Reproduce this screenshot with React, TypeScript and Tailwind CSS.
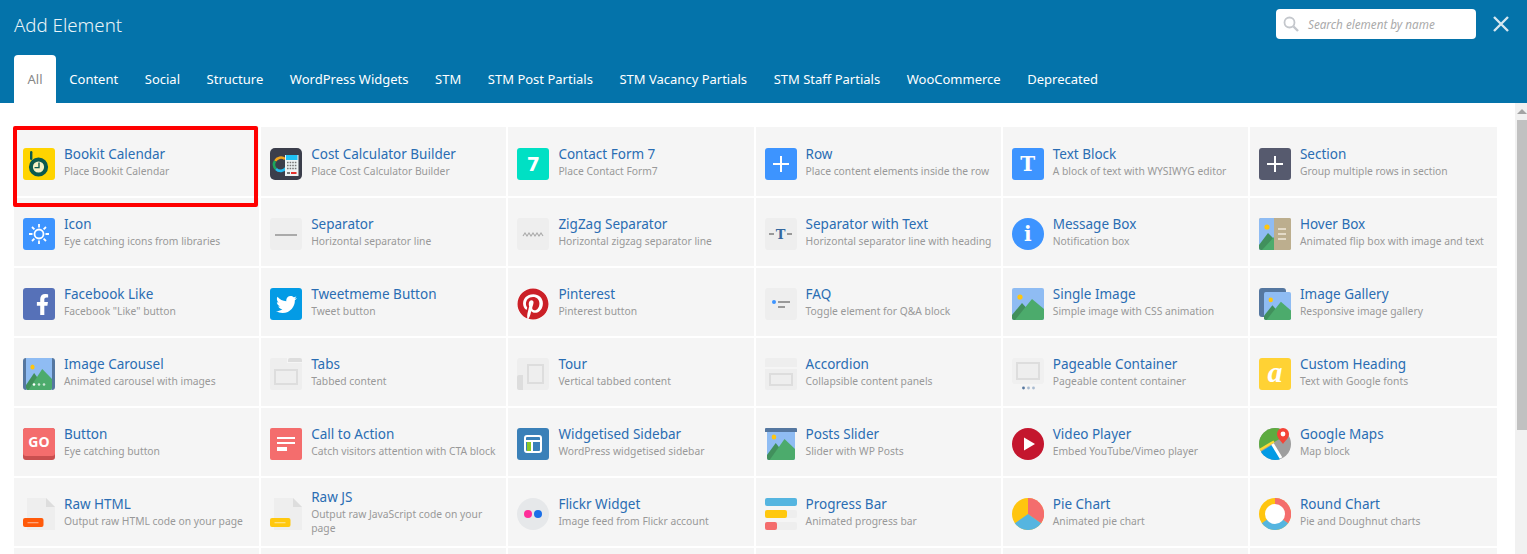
import React from "react";
import { FaFacebookF, FaPinterest, FaTwitter } from "react-icons/fa";

const tabs = ["Content", "Social", "Structure", "WordPress Widgets", "STM", "STM Post Partials", "STM Vacancy Partials", "STM Staff Partials", "WooCommerce", "Deprecated"];

// shared picture used by the image-like icons
const Hills = () => (
  <>
    <circle cx="8" cy="9" r="2.6" fill="#ffc50f" />
    <path d="M0 27L10 15L18 24L6 32H2a2 2 0 0 1-2-2Z" fill="#41905c" />
    <path d="M3 32L20 11L32 21V30a2 2 0 0 1-2 2Z" fill="#4cab6c" />
  </>
);

const Svg = ({ children }: { children: React.ReactNode }) => (
  <svg viewBox="0 0 32 32" className="w-8 h-8 shrink-0">{children}</svg>
);

const Square = ({ className, children }: { className: string; children: React.ReactNode }) => (
  <div className={`w-8 h-8 shrink-0 rounded-[3px] flex items-center justify-center ${className}`}>{children}</div>
);

const Plus = () => (
  <svg viewBox="0 0 32 32" className="w-8 h-8"><path d="M16 8V24M8 16H24" stroke="#fff" strokeWidth="2" /></svg>
);

const Doc = ({ color }: { color: string }) => (
  <Svg>
    <path d="M4 0H23L32 9V32H4Z" fill="#eee" />
    <path d="M23 0L32 9H23Z" fill="#ddd" />
    <rect x="0" y="20" width="20.5" height="9" rx="2" fill={color} />
    <rect x="4.5" y="24" width="11" height="1.3" fill="#fff" opacity=".45" />
  </Svg>
);

const icons: Record<string, React.ReactNode> = {
  bookit: (
    <Svg>
      <rect width="32" height="32" rx="3" fill="#ffd400" />
      <rect x="7" y="3" width="2.4" height="9" rx="1.2" fill="#0b5a4e" />
      <circle cx="15.5" cy="19" r="7.6" fill="#f4f1c4" stroke="#0b5a4e" strokeWidth="4" />
      <path d="M16 14.5V19.6H11.5" fill="none" stroke="#0b5a4e" strokeWidth="1.4" />
    </Svg>
  ),
  cost: (
    <Svg>
      <rect width="32" height="32" rx="5" fill="#3b3e4b" />
      <path d="M5.2 13A6.5 6.5 0 0 1 15 11" fill="none" stroke="#f2a51e" strokeWidth="2.6" />
      <path d="M6 21A6.5 6.5 0 0 1 5 13" fill="none" stroke="#1da55c" strokeWidth="2.6" />
      <path d="M16 20A6.5 6.5 0 0 1 6 21" fill="none" stroke="#25bdf0" strokeWidth="2.6" />
      <rect x="15" y="7" width="13.5" height="21" fill="#eef3f4" />
      <rect x="16" y="7" width="11.5" height="5" fill="#1fc2f5" />
      <path d="M17 14.5H26.5M17 17.5H26.5M17 20.5H26.5" stroke="#777" strokeWidth="1.4" strokeDasharray="1.6 1" />
      <rect x="21" y="24" width="5.5" height="2" fill="#e5322d" />
      <rect x="17" y="24" width="3" height="2" fill="#777" />
    </Svg>
  ),
  cf7: <Square className="bg-[#00e0c4] text-white text-[19px] font-bold font-['DejaVu_Sans',sans-serif] leading-none">7</Square>,
  row: <Square className="bg-[#3d94ff]"><Plus /></Square>,
  text: <Square className="bg-[#3d94ff] text-white text-[20px] font-bold font-['DejaVu_Serif',serif] leading-none">T</Square>,
  section: <Square className="bg-[#565a6e]"><Plus /></Square>,
  icon: (
    <Svg>
      <rect width="32" height="32" rx="3" fill="#3d94ff" />
      <circle cx="16" cy="16" r="4.5" fill="none" stroke="#fff" strokeWidth="1.8" />
      <path d="M16 6V9.5M16 22.5V26M6 16H9.5M22.5 16H26M9 9L11.4 11.4M20.6 20.6L23 23M23 9L20.6 11.4M11.4 20.6L9 23" stroke="#fff" strokeWidth="1.8" />
    </Svg>
  ),
  separator: (
    <Svg>
      <rect width="32" height="32" rx="3" fill="#eee" />
      <rect x="5" y="16" width="22" height="2" fill="#aaa" />
    </Svg>
  ),
  zigzag: (
    <Svg>
      <rect width="32" height="32" rx="3" fill="#eee" />
      <path d="M6 18L8 15L10 18L12 15L14 18L16 15L18 18L20 15L22 18L24 15L26 18" fill="none" stroke="#aaa" strokeWidth="1.1" />
    </Svg>
  ),
  septext: (
    <Square className="bg-[#eee] gap-[2px]">
      <span className="w-[5px] h-[2px] bg-[#999]" />
      <span className="text-[#34689f] text-[13px] font-bold font-['DejaVu_Serif',serif] leading-none">T</span>
      <span className="w-[5px] h-[2px] bg-[#999]" />
    </Square>
  ),
  message: (
    <div className="w-8 h-8 shrink-0 rounded-full bg-[#3d94ff] flex items-center justify-center text-white text-[20px] font-bold font-['DejaVu_Serif',serif] leading-none">i</div>
  ),
  hover: (
    <Svg>
      <defs>
        <clipPath id="hoverClip"><rect width="15" height="32" /></clipPath>
      </defs>
      <rect width="32" height="32" rx="2" fill="#bcae8e" />
      <g clipPath="url(#hoverClip)">
        <rect width="32" height="32" rx="2" fill="#8fbcf3" />
        <circle cx="8" cy="9" r="2.6" fill="#ffc50f" />
        <path d="M0 27L9 15L15 21V32H2a2 2 0 0 1-2-2Z" fill="#41905c" />
        <path d="M3 32L15 19V32Z" fill="#4cab6c" />
      </g>
      <path d="M15 0H30a2 2 0 0 1 2 2V30a2 2 0 0 1-2 2H15Z" fill="#bcae8e" />
      <path d="M19 11H27M19 16H27M19 21H27" stroke="#efe9da" strokeWidth="1.6" />
    </Svg>
  ),
  facebook: <Square className="bg-[#5671b8] text-white pl-[7px] text-[21px]"><FaFacebookF /></Square>,
  twitter: <Square className="bg-[#039be5] text-white text-[21px]"><FaTwitter /></Square>,
  pinterest: (
    <div className="w-8 h-8 shrink-0 rounded-full bg-white text-[#cb2027] text-[32px] flex"><FaPinterest /></div>
  ),
  faq: (
    <Svg>
      <rect width="32" height="32" rx="3" fill="#eee" />
      <circle cx="9" cy="14" r="2" fill="#3d94ff" />
      <rect x="13" y="13" width="12" height="2" fill="#999" />
      <rect x="13" y="18" width="7" height="2" fill="#999" />
    </Svg>
  ),
  single: (
    <Svg>
      <rect width="32" height="32" rx="2" fill="#8fbcf3" />
      <Hills />
    </Svg>
  ),
  gallery: (
    <Svg>
      <rect width="27" height="29" rx="3" fill="#5577a0" />
      <svg x="5" y="4" width="27" height="28" viewBox="0 0 32 32" preserveAspectRatio="none">
        <rect width="32" height="32" rx="2" fill="#8fbcf3" />
        <Hills />
      </svg>
    </Svg>
  ),
  carousel: (
    <Svg>
      <rect width="32" height="32" rx="3" fill="#5577a0" />
      <svg x="3" y="0" width="26" height="32" viewBox="0 0 32 32" preserveAspectRatio="none">
        <rect width="32" height="32" fill="#8fbcf3" />
        <Hills />
      </svg>
      <circle cx="11" cy="26.5" r="1.3" fill="#fff" />
      <circle cx="16" cy="26.5" r="1.3" fill="#fff" opacity=".7" />
      <circle cx="21" cy="26.5" r="1.3" fill="#fff" opacity=".7" />
    </Svg>
  ),
  tabs: (
    <Svg>
      <path d="M0 2a2 2 0 0 1 2-2H17V5H32V30a2 2 0 0 1-2 2H2a2 2 0 0 1-2-2Z" fill="#eee" />
      <path d="M18 2a2 2 0 0 1 2-2H30a2 2 0 0 1 2 2V4H18Z" fill="#ddd" />
      <rect x="5" y="12" width="22" height="14" fill="none" stroke="#ddd" strokeWidth="2" />
    </Svg>
  ),
  tour: (
    <Svg>
      <rect width="32" height="32" rx="3" fill="#eee" />
      <path d="M0 19a2 2 0 0 1 2-2H6V32H2a2 2 0 0 1-2-2Z" fill="#ddd" />
      <rect x="11" y="7" width="15" height="18" fill="none" stroke="#ddd" strokeWidth="2" />
    </Svg>
  ),
  accordion: (
    <Svg>
      <path d="M0 2a2 2 0 0 1 2-2H30a2 2 0 0 1 2 2V9H0Z" fill="#eee" />
      <path d="M0 11H32V30a2 2 0 0 1-2 2H2a2 2 0 0 1-2-2Z" fill="#eee" />
      <rect x="5" y="16" width="22" height="11" fill="none" stroke="#ddd" strokeWidth="2" />
    </Svg>
  ),
  pageable: (
    <Svg>
      <rect width="32" height="26" rx="3" fill="#f0f0f0" />
      <rect x="5" y="5" width="22" height="16" fill="#eee" stroke="#ddd" strokeWidth="2" />
      <circle cx="11.5" cy="30" r="1.4" fill="#5577a0" />
      <circle cx="16.5" cy="30" r="1.4" fill="#a9bbd0" />
      <circle cx="21.5" cy="30" r="1.4" fill="#a9bbd0" />
    </Svg>
  ),
  heading: <Square className="bg-[#ffd234] text-white text-[30px] italic font-bold font-['Liberation_Serif',serif] leading-none pb-[4px]">a</Square>,
  button: (
    <div className="w-8 h-8 shrink-0 rounded-[3px] bg-[#c94f4f]">
      <div className="h-7 rounded-[3px] bg-[#f46d6d] flex items-center justify-center text-white text-[14px] font-bold font-['Open_Sans',sans-serif] leading-none">GO</div>
    </div>
  ),
  cta: (
    <Svg>
      <rect width="32" height="32" rx="2" fill="#f46d6d" />
      <rect x="7" y="9" width="18" height="2" fill="#fff" />
      <rect x="7" y="14" width="18" height="2" fill="#fff" />
      <rect x="7" y="19" width="10" height="4" fill="#fff" />
    </Svg>
  ),
  sidebar: (
    <Svg>
      <rect width="32" height="32" rx="3" fill="#3a80b8" />
      <rect x="8" y="8" width="16" height="16" rx="2" fill="none" stroke="#fff" strokeWidth="2" />
      <rect x="8" y="12" width="16" height="2" fill="#fff" />
      <rect x="10" y="14" width="4" height="9" fill="#8ac926" />
      <rect x="14" y="14" width="2" height="9" fill="#fff" />
    </Svg>
  ),
  posts: (
    <Svg>
      <svg x="2" y="0" width="28" height="32" viewBox="0 0 32 32" preserveAspectRatio="none">
        <rect width="32" height="32" rx="2" fill="#8fbcf3" />
        <Hills />
      </svg>
      <path d="M0 1a1 1 0 0 1 1-1H31a1 1 0 0 1 1 1V4H0Z" fill="#5577a0" />
    </Svg>
  ),
  video: (
    <Svg>
      <circle cx="16" cy="16" r="16" fill="#c4162e" />
      <path d="M12 9.5L23 16L12 22.5Z" fill="#fff" />
    </Svg>
  ),
  maps: (
    <Svg>
      <defs>
        <clipPath id="mapClip"><circle cx="16" cy="16" r="16" /></clipPath>
      </defs>
      <g clipPath="url(#mapClip)">
        <rect width="32" height="32" fill="#9e9e9e" />
        <path d="M0 0H24V9L0 23Z" fill="#5dab40" />
        <path d="M0 32V25L13 17L22 32Z" fill="#039be5" />
        <path d="M0 22.5L15 13.5" stroke="#fdd835" strokeWidth="2.4" />
        <path d="M13.5 16L22 30" stroke="#fff" strokeWidth="3" />
      </g>
      <path d="M24 0a6 6 0 0 1 6 6C30 10 26 13 24 16C22 13 18 10 18 6a6 6 0 0 1 6-6Z" fill="#f44336" />
      <circle cx="24" cy="6" r="2.4" fill="#fff" />
    </Svg>
  ),
  html: <Doc color="#ff5a0a" />,
  js: <Doc color="#ffc80f" />,
  flickr: (
    <Svg>
      <circle cx="16" cy="16" r="16" fill="#e6e8ea" />
      <circle cx="11" cy="16" r="4" fill="#ff2e9a" />
      <circle cx="21" cy="16" r="4" fill="#1a6fe8" />
    </Svg>
  ),
  progress: (
    <div className="w-8 h-8 shrink-0 flex flex-col justify-between">
      <div className="h-2 rounded-[2px] bg-[#55b5e0]" />
      <div className="h-2 rounded-[2px] bg-[#eee]"><div className="h-2 w-[22px] rounded-[2px] bg-[#ffc80f]" /></div>
      <div className="h-2 rounded-[2px] bg-[#eee]"><div className="h-2 w-3 rounded-[2px] bg-[#f46d6d]" /></div>
    </div>
  ),
  pie: (
    <Svg>
      <circle cx="16" cy="16" r="16" fill="#ffc50f" />
      <path d="M16 16V0A16 16 0 0 1 29.1 25.2Z" fill="#f46d6d" />
      <path d="M16 16L29.1 25.2A16 16 0 0 1 2.9 25.2Z" fill="#55b5e0" />
    </Svg>
  ),
  round: (
    <Svg>
      <circle cx="16" cy="16" r="16" fill="#ffc50f" />
      <path d="M16 16V0A16 16 0 0 1 29.1 25.2Z" fill="#f46d6d" />
      <path d="M16 16L29.1 25.2A16 16 0 0 1 2.9 25.2Z" fill="#55b5e0" />
      <circle cx="16" cy="16" r="10" fill="#fff" />
    </Svg>
  ),
};

const elements = [
  ["bookit", "Bookit Calendar", "Place Bookit Calendar"],
  ["cost", "Cost Calculator Builder", "Place Cost Calculator Builder"],
  ["cf7", "Contact Form 7", "Place Contact Form7"],
  ["row", "Row", "Place content elements inside the row"],
  ["text", "Text Block", "A block of text with WYSIWYG editor"],
  ["section", "Section", "Group multiple rows in section"],
  ["icon", "Icon", "Eye catching icons from libraries"],
  ["separator", "Separator", "Horizontal separator line"],
  ["zigzag", "ZigZag Separator", "Horizontal zigzag separator line"],
  ["septext", "Separator with Text", "Horizontal separator line with heading"],
  ["message", "Message Box", "Notification box"],
  ["hover", "Hover Box", "Animated flip box with image and text"],
  ["facebook", "Facebook Like", 'Facebook "Like" button'],
  ["twitter", "Tweetmeme Button", "Tweet button"],
  ["pinterest", "Pinterest", "Pinterest button"],
  ["faq", "FAQ", "Toggle element for Q&A block"],
  ["single", "Single Image", "Simple image with CSS animation"],
  ["gallery", "Image Gallery", "Responsive image gallery"],
  ["carousel", "Image Carousel", "Animated carousel with images"],
  ["tabs", "Tabs", "Tabbed content"],
  ["tour", "Tour", "Vertical tabbed content"],
  ["accordion", "Accordion", "Collapsible content panels"],
  ["pageable", "Pageable Container", "Pageable content container"],
  ["heading", "Custom Heading", "Text with Google fonts"],
  ["button", "Button", "Eye catching button"],
  ["cta", "Call to Action", "Catch visitors attention with CTA block"],
  ["sidebar", "Widgetised Sidebar", "WordPress widgetised sidebar"],
  ["posts", "Posts Slider", "Slider with WP Posts"],
  ["video", "Video Player", "Embed YouTube/Vimeo player"],
  ["maps", "Google Maps", "Map block"],
  ["html", "Raw HTML", "Output raw HTML code on your page"],
  ["js", "Raw JS", "Output raw JavaScript code on your page"],
  ["flickr", "Flickr Widget", "Image feed from Flickr account"],
  ["progress", "Progress Bar", "Animated progress bar"],
  ["pie", "Pie Chart", "Animated pie chart"],
  ["round", "Round Chart", "Pie and Doughnut charts"],
];

export default function App() {
  return (
    <div className="w-[1527px] h-[554px] overflow-hidden bg-white flex flex-col font-['Noto_Sans',sans-serif]">
      {/* Header with title, search and tabs */}
      <header className="h-[103px] shrink-0 bg-[#0473aa] flex flex-col justify-between px-[14px]">
        <div className="flex items-start justify-between pt-[9px]">
          <h1 className="text-[18.7px] leading-[32px] font-light text-[#eaf4f8]">Add Element</h1>
          <div className="flex items-center mr-[4px]">
            <div className="w-[200px] h-[30px] bg-white rounded-[4px] flex items-center pl-[7px] gap-[9px]">
              <svg viewBox="0 0 16 16" className="w-4 h-4 text-[#c4c7cc]" fill="none" stroke="currentColor">
                <circle cx="6.5" cy="6.5" r="5" strokeWidth="1.8" />
                <path d="M10.5 10.5L15 15" strokeWidth="2.4" />
              </svg>
              <span className="text-[11.7px] italic text-[#aaa] pt-[2px]">Search element by name</span>
            </div>
            <svg viewBox="0 0 16 16" className="w-4 h-4 ml-[17px] text-[#d6e7f0]" fill="none" stroke="currentColor" strokeWidth="2.4">
              <path d="M1 1L15 15M15 1L1 15" />
            </svg>
          </div>
        </div>
        <nav className="flex h-[48px] items-stretch text-[13px]">
          <div className="w-[42px] bg-white rounded-t-[4px] text-[#888] flex items-center justify-center pt-[1px]">All</div>
          {tabs.map((t) => (
            <div key={t} className="px-[13.3px] text-white flex items-center pt-[1px]">{t}</div>
          ))}
        </nav>
      </header>

      {/* Element list and its scrollbar */}
      <div className="flex-1 flex min-h-0">
        <main className="flex-1 pl-[14px] pt-[24px]">
          <div className="w-[1483px] grid grid-cols-[repeat(5,245.2px)_1fr] grid-rows-[69px] auto-rows-[68px] gap-[2px]">
            {elements.map(([key, name, desc], i) => (
              <div key={name} className={`relative bg-[#f5f5f5] flex items-center gap-[9px] pl-[9px] ${i < 6 ? "pt-[5px]" : "pt-[4px]"}`}>
                {icons[key]}
                <div className="min-w-0 pb-[4px]">
                  <div className="text-[13.5px] leading-[17px] text-[#2a6db3]">{name}</div>
                  <div className="text-[10.3px] leading-[14px] text-[#999] mt-[1px]">{desc}</div>
                </div>
                {i === 0 && (
                  <div className="absolute z-10 -left-px -top-px w-[245px] h-[81px] border-[4px] border-[#ff0000] rounded-[2px]" />
                )}
              </div>
            ))}
            {[0, 1, 2, 3, 4, 5].map((n) => (
              <div key={n} className="bg-[#f5f5f5]" />
            ))}
          </div>
        </main>
        <div className="w-[12px] shrink-0 bg-[#f1f1f1] flex flex-col pl-[2px]">
          <div className="h-[17px] flex items-center justify-center">
            <div className="w-0 h-0 border-x-[5px] border-x-transparent border-b-[5px] border-b-[#a3a3a3]" />
          </div>
          <div className="h-[310px] bg-[#c1c1c1]" />
        </div>
      </div>
    </div>
  );
}
